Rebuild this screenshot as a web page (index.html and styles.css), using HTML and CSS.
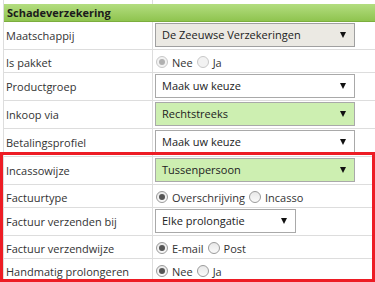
FILE: index.html
```html
<!DOCTYPE html>
<html lang="nl">
<head>
    <meta charset="UTF-8">
    <meta name="viewport" content="width=device-width, initial-scale=1.0">
    <title>Schadeverzekering</title>
    <link rel="stylesheet" href="styles.css">
</head>
<body>
    <div class="sheet">
        <div class="row row-top"><div class="label"></div><div class="value"></div></div>
        <div class="head">Schadeverzekering</div>

        <div class="row row-select">
            <div class="label">Maatschappij</div>
            <div class="value"><div class="select select-locked">De Zeeuwse Verzekeringen</div></div>
        </div>
        <div class="row row-radio">
            <div class="label">Is pakket</div>
            <div class="value">
                <label class="opt disabled"><span class="radio on"></span>Nee</label>
                <label class="opt disabled"><span class="radio"></span>Ja</label>
            </div>
        </div>
        <div class="row row-select">
            <div class="label">Productgroep</div>
            <div class="value"><div class="select">Maak uw keuze</div></div>
        </div>
        <div class="row row-select">
            <div class="label">Inkoop via</div>
            <div class="value"><div class="select select-ok">Rechtstreeks</div></div>
        </div>
        <div class="row row-select">
            <div class="label">Betalingsprofiel</div>
            <div class="value"><div class="select">Maak uw keuze</div></div>
        </div>

        <!-- gemarkeerde velden -->
        <div class="row row-select">
            <div class="label">Incassowijze</div>
            <div class="value"><div class="select select-ok">Tussenpersoon</div></div>
        </div>
        <div class="row row-radio">
            <div class="label">Factuurtype</div>
            <div class="value">
                <label class="opt"><span class="radio on"></span>Overschrijving</label>
                <label class="opt"><span class="radio"></span>Incasso</label>
            </div>
        </div>
        <div class="row row-select">
            <div class="label">Factuur verzenden bij</div>
            <div class="value"><div class="select select-small">Elke prolongatie</div></div>
        </div>
        <div class="row row-radio">
            <div class="label">Factuur verzendwijze</div>
            <div class="value">
                <label class="opt"><span class="radio on"></span>E-mail</label>
                <label class="opt"><span class="radio"></span>Post</label>
            </div>
        </div>
        <div class="row row-radio">
            <div class="label">Handmatig prolongeren</div>
            <div class="value">
                <label class="opt"><span class="radio on"></span>Nee</label>
                <label class="opt"><span class="radio"></span>Ja</label>
            </div>
        </div>

        <div class="highlight"></div>
    </div>
</body>
</html>
```

FILE: styles.css
```css
html, body {
    overflow: hidden;
}
body {
    margin: 0;
    font-family: 'Open Sans', 'Noto Sans', sans-serif;
    font-size: 11px;
    color: #333;
    background-color: #fff;
}
.sheet {
    position: relative;
    margin-left: 3px;
    width: 371px;
    border-left: 1px solid #ddd;
}
.row {
    display: grid;
    grid-template-columns: 149px 1fr;
    border-bottom: 1px solid #ddd;
}
.row-top {
    height: 4px;
    border-bottom: none;
}
.row-select {
    height: 27px;
}
.row-radio {
    height: 22px;
}
.label {
    display: flex;
    align-items: center;
    padding-left: 2px;
    border-right: 1px solid #ddd;
    white-space: nowrap;
}
.value {
    display: flex;
    align-items: center;
    padding-left: 2px;
}
.row-select .value {
    align-items: flex-start;
    padding-top: 1px;
}
.head {
    height: 17px;
    line-height: 17px;
    padding-left: 3px;
    font-weight: bold;
    color: #1b1b1b;
    background: linear-gradient(#b3dd80, #8fc44f);
    border-bottom: 1px solid #7cae3e;
}
.select {
    position: relative;
    box-sizing: border-box;
    width: 200px;
    height: 24px;
    line-height: 22px;
    padding-left: 6px;
    border: 1px solid #a9a9a9;
    background-color: #fff;
    color: #222;
}
.select::after {
    content: "";
    position: absolute;
    right: 8px;
    top: 8px;
    border-left: 3.5px solid transparent;
    border-right: 3.5px solid transparent;
    border-top: 6px solid #111;
}
.select-locked {
    background-color: #ebe9e3;
    border-color: #a0a0a0;
}
.select-ok {
    background-color: #cdefb1;
}
.select-small {
    width: 141px;
}
.opt {
    display: flex;
    align-items: center;
    margin-right: 3px;
    line-height: 22px;
    padding-top: 2px;
}
.radio {
    box-sizing: border-box;
    width: 12px;
    height: 12px;
    margin: 0 4px 2px 1px;
    border-radius: 50%;
    border: 1px solid #9a9a9a;
    background: linear-gradient(#e8e8e8, #fafafa);
    position: relative;
}
.radio.on::after {
    content: "";
    position: absolute;
    left: 2px;
    top: 2px;
    width: 6px;
    height: 6px;
    border-radius: 50%;
    background: #555;
}
.disabled .radio {
    border-color: #c8c8c8;
    background: #f2f2f2;
}
.disabled .radio.on::after {
    background: #b0b0b0;
}
.highlight {
    position: absolute;
    left: -4px;
    top: 152px;
    width: 375px;
    height: 130px;
    box-sizing: border-box;
    border: 3px solid #ed1c24;
}
```
